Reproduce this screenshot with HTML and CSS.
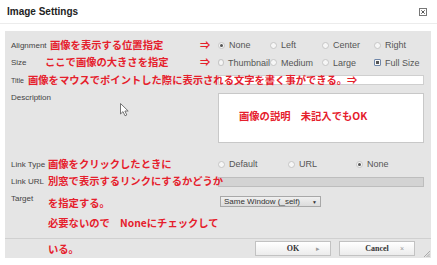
FILE: index.html
```html
<!DOCTYPE html>
<html lang="ja">

<head>
    <meta charset="UTF-8">
    <title>Image Settings</title>
    <link rel="stylesheet" href="styles.css">
</head>

<body>
<div class="page">
    <div class="dialog">
        <div class="titlebar">
            <span class="title">Image Settings</span>
            <svg class="close" width="8" height="8" viewBox="0 0 8 8">
                <rect x="0.5" y="0.5" width="7" height="7" fill="#fff" stroke="#777"/>
                <path d="M2.3 2.3 L5.7 5.7 M5.7 2.3 L2.3 5.7" stroke="#444" stroke-width="0.9"/>
            </svg>
        </div>

        <div class="panel">
            <div class="form">
                <div class="row">
                    <div class="label">Alignment</div>
                    <div class="opts">
                        <span class="opt"><i class="radio on"></i>None</span>
                        <span class="opt"><i class="radio"></i>Left</span>
                        <span class="opt"><i class="radio"></i>Center</span>
                        <span class="opt"><i class="radio"></i>Right</span>
                    </div>
                </div>
                <div class="row short">
                    <div class="label">Size</div>
                    <div class="opts">
                        <span class="opt"><i class="radio"></i>Thumbnail</span>
                        <span class="opt"><i class="radio"></i>Medium</span>
                        <span class="opt"><i class="radio"></i>Large</span>
                        <span class="opt"><i class="check on"></i>Full Size</span>
                    </div>
                </div>
                <div class="row">
                    <div class="label small">Title</div>
                    <div class="input"></div>
                </div>
                <div class="row desc">
                    <div class="label">Description</div>
                    <div class="textarea"></div>
                </div>
                <div class="row link">
                    <div class="label">Link Type</div>
                    <div class="opts three">
                        <span class="opt"><i class="radio"></i>Default</span>
                        <span class="opt"><i class="radio"></i>URL</span>
                        <span class="opt"><i class="radio on"></i>None</span>
                    </div>
                </div>
                <div class="row short">
                    <div class="label">Link URL</div>
                    <div class="input disabled"></div>
                </div>
                <div class="row target">
                    <div class="label">Target</div>
                    <div class="select">Same Window (_self)<span class="caret">&#9660;</span></div>
                </div>
            </div>

            <div class="footer">
                <div class="btn">OK<span class="btn-icon">&#9656;</span></div>
                <div class="btn">Cancel<span class="btn-icon">&#215;</span></div>
            </div>

            <svg class="grip" width="7" height="7" viewBox="0 0 7 7">
                <path d="M7 1 L1 7 M7 3.5 L3.5 7 M7 5.5 L5.5 7" stroke="#999" stroke-width="0.8"/>
            </svg>
        </div>
    </div>

    <!-- red notes written over the dialog -->
    <span class="note n1">画像を表示する位置指定</span>
    <span class="note a1">⇒</span>
    <span class="note n2">ここで画像の大きさを指定</span>
    <span class="note a2">⇒</span>
    <span class="note n3">画像をマウスでポイントした際に表示される文字を書く事ができる。⇒</span>
    <span class="note n4">画像の説明　未記入でもOK</span>
    <span class="note n5">画像をクリックしたときに</span>
    <span class="note n6">別窓で表示するリンクにするかどうか</span>
    <span class="note n7">を指定する。</span>
    <span class="note n8">必要ないので　Noneにチェックして</span>
    <span class="note n9">いる。</span>

    <svg class="cursor" width="10" height="14" viewBox="0 0 10 14">
        <path d="M0.5 0.5 L0.5 11 L3 8.6 L5 12.8 L6.8 12 L4.9 8 L8.2 8 Z" fill="#fff" stroke="#666" stroke-width="0.9"/>
    </svg>
</div>
</body>
</html>
```

FILE: styles.css
```css
body {
    margin: 0;
    background: #fff;
    font-family: "Liberation Sans", Arial, sans-serif;
    color: #444;
}

.page {
    position: relative;
    width: 437px;
    height: 265px;
    overflow: hidden;
}

.dialog {
    width: 437px;
    height: 265px;
    display: flex;
    flex-direction: column;
}

.titlebar {
    height: 23px;
    border-bottom: 1px solid #ececec;
    display: flex;
    align-items: center;
    justify-content: space-between;
    padding: 0 10px 0 7px;
}

.title {
    font-size: 10px;
    font-weight: bold;
    color: #222;
}

.panel {
    position: relative;
    margin: 7px 6px 7px 5px;
    flex: 1;
    background: #e5e5e5;
    display: flex;
    flex-direction: column;
}

.form {
    flex: 1;
    padding: 5px 0 0 6px;
}

.row {
    display: flex;
    align-items: center;
    height: 18px;
}

.row.short {
    height: 17px;
}

.row.desc {
    height: auto;
    align-items: flex-start;
    margin-top: 4px;
}

.row.link {
    margin-top: 12px;
}

.row.target {
    align-items: flex-start;
}

.label {
    width: 207px;
    flex: none;
    font-size: 8px;
    color: #444;
}

.row.target .label {
    line-height: 18px;
}

.label.small {
    font-size: 7px;
}

.opts {
    display: grid;
    grid-template-columns: repeat(4, 52px);
}

.opts.three {
    grid-template-columns: 70px 68px 68px;
}

.opt {
    display: flex;
    align-items: center;
    gap: 4px;
    font-size: 9px;
    color: #555;
}

.radio,
.check {
    position: relative;
    width: 7px;
    height: 7px;
    box-sizing: border-box;
    border: 1px solid #c6c6c6;
    border-radius: 50%;
    background: #f6f6f6;
}

.check {
    border-radius: 1px;
    border-color: #6f86a8;
}

.radio.on::after,
.check.on::after {
    content: "";
    position: absolute;
    left: 1px;
    top: 1px;
    width: 3px;
    height: 3px;
    border-radius: 50%;
    background: #555;
}

.check.on::after {
    border-radius: 0;
}

.input {
    width: 206px;
    height: 10px;
    box-sizing: border-box;
    border: 1px solid #cfcfcf;
    background: #fff;
}

.input.disabled {
    background: #d3d3d3;
    border-color: #bdbdbd;
}

.textarea {
    width: 206px;
    height: 50px;
    box-sizing: border-box;
    border: 1px solid #c8c8c8;
    background: #fff;
}

.select {
    margin: 6px 0 0 2px;
    width: 101px;
    height: 11px;
    box-sizing: border-box;
    border: 1px solid #a8a8a8;
    background: linear-gradient(#f0f0f0, #dcdcdc);
    font-size: 8px;
    color: #333;
    display: flex;
    align-items: center;
    justify-content: space-between;
    padding: 0 3px;
}

.caret {
    font-size: 5px;
}

.footer {
    height: 19px;
    border-top: 1px solid #d0d0d0;
    display: flex;
    align-items: center;
    justify-content: flex-end;
    gap: 8px;
    padding-right: 16px;
}

.btn {
    position: relative;
    width: 76px;
    height: 15px;
    box-sizing: border-box;
    border: 1px solid #c2c2c2;
    background: linear-gradient(#fff, #ececec);
    font-family: "Liberation Serif", serif;
    font-weight: bold;
    font-size: 8px;
    color: #333;
    display: flex;
    align-items: center;
    justify-content: center;
}

.btn-icon {
    position: absolute;
    right: 10px;
    font-family: "Liberation Sans", sans-serif;
    font-weight: normal;
    font-size: 7px;
    color: #999;
}

.grip {
    position: absolute;
    right: 1px;
    bottom: 1px;
}

.note {
    position: absolute;
    font-family: "Noto Sans CJK JP", sans-serif;
    font-weight: bold;
    font-size: 10.3px;
    line-height: 14px;
    color: #e5202c;
    white-space: nowrap;
}

.n1 { left: 50px; top: 38px; }
.a1 { left: 200px; top: 38px; }
.n2 { left: 45px; top: 55px; }
.a2 { left: 200px; top: 55px; }
.n3 { left: 28px; top: 73px; }
.n4 { left: 239px; top: 109px; }
.n5 { left: 48px; top: 157px; }
.n6 { left: 48px; top: 174px; }
.n7 { left: 48px; top: 196px; }
.n8 { left: 48px; top: 216px; }
.n9 { left: 48px; top: 242px; }

.cursor {
    position: absolute;
    left: 120px;
    top: 103px;
}
```
